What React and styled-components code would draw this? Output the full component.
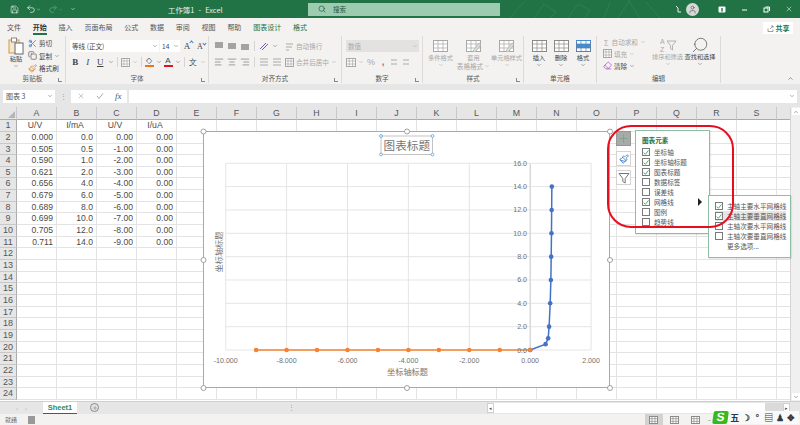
import React from "react";
import styled, { createGlobalStyle } from "styled-components";
import {
  AlignCenter,
  AlignLeft,
  AlignRight,
  ChevronDown,
  ChevronUp,
  Copy,
  Eraser,
  Paintbrush,
  Plus,
  Redo2,
  Save,
  Scissors,
  Search,
  Undo2,
  User,
  X,
} from "lucide-react";

const FONT = `"Noto Sans CJK SC", "Liberation Sans", sans-serif`;

const GlobalStyle = createGlobalStyle`
  html, body { margin: 0; padding: 0; background: #fff; }
  * { box-sizing: border-box; }
`;

const Window = styled.div`
  position: relative;
  width: 800px;
  height: 425px;
  overflow: hidden;
  display: flex;
  flex-direction: column;
  font-family: ${FONT};
  font-size: 7px;
  color: #444;
  background: #f3f2f1;
`;

/* title bar */
const TitleBar = styled.div`
  position: relative;
  height: 18px;
  flex: none;
  background: #217346;
  color: #fff;
  display: flex;
  align-items: center;
`;
const TitleArt = styled.svg`
  position: absolute;
  left: 500px;
  top: 0;
`;
const Quick = styled.div`
  width: 168px;
  padding-left: 10px;
  display: flex;
  align-items: center;
  gap: 7px;
`;
const QuickGroup = styled.span`
  display: flex;
  align-items: center;
  opacity: ${(p) => (p.$off ? 0.35 : 0.95)};
`;
const DocName = styled.div`
  width: 140px;
  font-size: 7.4px;
  word-spacing: 2.5px;
  opacity: 0.9;
`;
const SearchBox = styled.div`
  width: 192px;
  height: 13px;
  background: #9ccbb0;
  color: #24583c;
  display: flex;
  align-items: center;
  gap: 7px;
  padding-left: 10px;
  font-size: 6.5px;
`;
const WinButtons = styled.div`
  position: relative;
  flex: 1;
  display: flex;
  justify-content: flex-end;
  align-items: center;
  gap: 15px;
  padding-right: 7px;
`;
const Avatar = styled.span`
  width: 13px;
  height: 13px;
  border-radius: 50%;
  background: #d8d8d8;
  color: #666;
  display: flex;
  align-items: center;
  justify-content: center;
  margin: 0 4px 0 -11px;
`;

/* ribbon tabs */
const TabBar = styled.div`
  height: 17px;
  flex: none;
  display: flex;
  align-items: center;
  gap: 11.8px;
  padding-left: 7px;
`;
const Tab = styled.span`
  position: relative;
  font-size: 7px;
  line-height: 14px;
  font-weight: ${(p) => (p.$active ? 700 : 400)};
  color: ${(p) => (p.$green ? "#217346" : p.$active ? "#333" : "#555")};
  ${(p) =>
    p.$active &&
    `&::after {
      content: "";
      position: absolute;
      left: 0;
      right: 0;
      bottom: -1px;
      height: 1.3px;
      background: #217346;
    }`}
`;
const Share = styled.span`
  margin-left: auto;
  margin-right: 7px;
  width: 30px;
  height: 12px;
  margin-top: 3px;
  background: #fff;
  color: #217346;
  font-weight: 700;
  display: flex;
  align-items: center;
  justify-content: center;
  gap: 2px;
`;

/* ribbon */
const Ribbon = styled.div`
  height: 49px;
  flex: none;
  display: flex;
`;
const Group = styled.div`
  width: ${(p) => p.$w}px;
  margin: 1px 0;
  border-right: 1px solid #dcdbda;
  display: flex;
  flex-direction: column;
`;
const GroupBody = styled.div`
  flex: 1;
  display: flex;
  padding: ${(p) => p.$pad || "2px 3px 0"};
  gap: ${(p) => p.$gap || 0}px;
  min-height: 0;
`;
const GroupLabel = styled.div`
  position: relative;
  height: 9px;
  line-height: 9px;
  text-align: center;
  font-size: 6.6px;
  color: #555;
`;
const Launcher = styled.span`
  position: absolute;
  right: 3px;
  bottom: 1px;
  width: 4px;
  height: 4px;
  border-left: 1px solid #888;
  border-bottom: 1px solid #888;
`;
const Stack = styled.div`
  display: flex;
  flex: none;
  flex-direction: column;
  gap: ${(p) => p.$gap ?? 4}px;
  width: ${(p) => (p.$w ? `${p.$w}px` : "auto")};
`;
const Row = styled.div`
  display: flex;
  align-items: center;
  height: ${(p) => p.$h || 12}px;
  gap: ${(p) => p.$gap ?? 2}px;
  margin-left: ${(p) => p.$ml || 0}px;
  color: ${(p) => (p.$off ? "#a8a8a8" : "inherit")};
  font-size: 6.6px;
  white-space: nowrap;
`;
const Field = styled.div`
  width: ${(p) => p.$w}px;
  height: 12px;
  background: ${(p) => p.$bg || "#fff"};
  color: ${(p) => p.$color || "#444"};
  display: flex;
  align-items: center;
  justify-content: space-between;
  padding: 0 1px 0 2px;
  font-size: 6.6px;
`;
const BigButton = styled.div`
  width: ${(p) => p.$w}px;
  flex: none;
  display: flex;
  flex-direction: column;
  align-items: center;
  color: ${(p) => (p.$off ? "#a8a8a8" : "#444")};
  font-size: 6.2px;
  line-height: 8px;
  text-align: center;
  white-space: nowrap;
`;
const BigIcon = styled.div`
  height: 17px;
  display: flex;
  align-items: center;
  justify-content: center;
`;
const Face = styled.span`
  position: relative;
  font-family: "Liberation Serif", serif;
  font-size: ${(p) => p.$size || 9}px;
  font-weight: ${(p) => (p.$bold ? 700 : 400)};
  font-style: ${(p) => (p.$italic ? "italic" : "normal")};
  text-decoration: ${(p) => (p.$under ? "underline" : "none")};
  width: ${(p) => p.$w || 12}px;
  text-align: center;
  color: #444;
`;
const SizeMark = styled.span`
  position: absolute;
  right: 0;
  top: 0;
  width: 3px;
  height: 3px;
  border-left: 0.8px solid #3b7fc9;
  border-top: 0.8px solid #3b7fc9;
  transform: ${(p) => (p.$down ? "rotate(225deg)" : "rotate(45deg)")};
`;
const Swatch = styled.span`
  width: 9px;
  display: flex;
  flex-direction: column;
  align-items: center;
  line-height: 8px;
  font-family: "Liberation Sans", sans-serif;
  font-size: 8px;
  color: #444;
  &::after {
    content: "";
    width: 9px;
    height: 2px;
    background: ${(p) => p.$color};
  }
`;
const Hair = styled.span`
  width: 1px;
  height: 10px;
  background: #d5d4d3;
  margin: 0 1px;
`;
const NumSign = styled.span`
  width: ${(p) => p.$w || 10}px;
  text-align: center;
  font-family: "Liberation Sans", sans-serif;
  font-size: 9px;
  font-weight: ${(p) => (p.$bold ? 700 : 400)};
  color: ${(p) => (p.$bold ? "#777" : "#a8a8a8")};
`;
const FindIcon = styled(Search)`
  transform: scaleX(-1);
`;
const Collapse = styled.div`
  margin-left: 66px;
  height: 47px;
  display: flex;
  align-items: flex-end;
`;

/* formula bar */
const FormulaBar = styled.div`
  height: 23px;
  flex: none;
  background: #e6e6e6;
  display: flex;
  align-items: center;
  gap: 2px;
  padding: 3px 3px 2px;
`;
const NameBox = styled.div`
  width: 52px;
  height: 13px;
  background: #fff;
  display: flex;
  align-items: center;
  justify-content: space-between;
  padding: 0 2px 0 3px;
  color: #555;
  font-size: 7px;
`;
const Dots = styled.div`
  width: 12px;
  text-align: center;
  color: #999;
  font-size: 7px;
`;
const FxBox = styled.div`
  width: 56px;
  height: 13px;
  background: #fff;
  display: flex;
  align-items: center;
  justify-content: space-around;
  color: #aaa;
`;
const FxText = styled.i`
  font-family: "Liberation Serif", serif;
  font-size: 9px;
  color: #555;
`;
const FormulaInput = styled.div`
  flex: 1;
  height: 13px;
  background: #fff;
  display: flex;
  align-items: center;
  justify-content: flex-end;
  padding-right: 2px;
`;

/* sheet */
const SheetArea = styled.div`
  height: 294px;
  flex: none;
  display: flex;
  background: #fff;
`;
const Grid = styled.div`
  width: 790px;
  overflow: hidden;
  display: grid;
  grid-template-columns: 17px repeat(20, 40px);
  grid-template-rows: 13.2px repeat(24, 11.67px);
  font-family: "Liberation Sans", sans-serif;
  font-size: 8.6px;
`;
const Corner = styled.div`
  background: #e6e6e6;
  border-right: 1px solid #c8c8c8;
  border-bottom: 1px solid #ababab;
  position: relative;
  &::after {
    content: "";
    position: absolute;
    right: 1px;
    bottom: 1px;
    border-style: solid;
    border-width: 0 0 7px 7px;
    border-color: transparent transparent #b5b5b5 transparent;
  }
`;
const ColHead = styled.div`
  background: #e6e6e6;
  border-right: 1px solid #c8c8c8;
  border-bottom: 1px solid #ababab;
  color: #555;
  text-align: center;
  line-height: 13px;
  font-size: 8.8px;
`;
const RowHead = styled.div`
  background: #e6e6e6;
  border-right: 1px solid #ababab;
  border-bottom: 1px solid #c8c8c8;
  color: #555;
  text-align: center;
  line-height: 11px;
  font-size: 9px;
`;
const Cell = styled.div`
  border-right: 1px solid #e3e3e3;
  border-bottom: 1px solid #e3e3e3;
  color: #4a4a4a;
  line-height: 11px;
  padding-right: 3px;
  text-align: ${(p) => (p.$center ? "center" : "right")};
  white-space: nowrap;
`;
const VScroll = styled.div`
  width: 10px;
  background: #f0f0f0;
  border-left: 1px solid #d4d4d4;
  display: flex;
  flex-direction: column;
  justify-content: space-between;
  align-items: center;
  padding: 1px 0;
`;
const ScrollCap = styled.span`
  width: 8px;
  height: 7px;
  background: #fff;
  color: #555;
  display: flex;
  align-items: center;
  justify-content: center;
`;

/* chart lies over the grid */
const ChartFrame = styled.div`
  position: absolute;
  left: 203px;
  top: 131px;
  width: 407px;
  height: 257px;
  background: #fff;
  border: 1px solid #a9a9a9;
`;
const ChartSvg = styled.svg`
  position: absolute;
  left: -1px;
  top: -1px;
  overflow: visible;
  font-family: ${FONT};
`;

const SideButton = styled.div`
  position: absolute;
  left: 616px;
  top: ${(p) => p.$y}px;
  width: 15px;
  height: 15px;
  background: ${(p) => (p.$on ? "#a9a9a9" : "#fff")};
  border: 1px solid ${(p) => (p.$on ? "#969696" : "#d4d4d4")};
  display: flex;
  align-items: center;
  justify-content: center;
`;
const Popup = styled.div`
  position: absolute;
  left: ${(p) => p.$x}px;
  top: ${(p) => p.$y}px;
  width: ${(p) => p.$w}px;
  height: ${(p) => p.$h}px;
  padding: ${(p) => p.$pad};
  background: #fff;
  border: 1px solid #8fbda4;
  box-shadow: 1px 1px 1px rgba(0, 0, 0, 0.08);
`;
const PopupTitle = styled.div`
  height: 14px;
  line-height: 14px;
  font-size: 6.6px;
  font-weight: 700;
  color: #217346;
`;
const CheckRow = styled.div`
  height: 10px;
  display: flex;
  align-items: center;
  gap: 4px;
  font-size: 6.6px;
  color: #555;
  white-space: nowrap;
  background: ${(p) => (p.$hot ? "#e6e6e6" : "transparent")};
  margin-right: ${(p) => (p.$hot ? 4 : 0)}px;
`;
const Box = styled.span`
  width: 8px;
  height: 8px;
  flex: none;
  border: 1px solid #7a7a7a;
  background: #fff;
  display: flex;
  align-items: center;
  justify-content: center;
`;
const MoreRow = styled.div`
  height: 10px;
  line-height: 10px;
  padding-left: 12px;
  font-size: 6.6px;
  color: #555;
`;
const Pointer = styled.span`
  position: absolute;
  left: 698px;
  top: 198px;
  border-style: solid;
  border-width: 4px 0 4px 4.5px;
  border-color: transparent transparent transparent #222;
`;
const RedMark = styled.div`
  position: absolute;
  left: 607px;
  top: 125px;
  width: 127px;
  height: 103px;
  border: 2px solid #e60f1f;
  border-radius: 24px;
  pointer-events: none;
`;

/* sheet tabs */
const SheetBar = styled.div`
  height: 13px;
  flex: none;
  background: #e6e6e6;
  border-top: 1px solid #cfcfcf;
  display: flex;
  align-items: stretch;
`;
const TabNav = styled.div`
  width: 43px;
  display: flex;
  align-items: center;
  justify-content: center;
  gap: 7px;
  color: #aaa;
  font-size: 6px;
`;
const SheetTab = styled.div`
  width: 34px;
  background: #fff;
  border-bottom: 1.5px solid #217346;
  color: #2f8a5c;
  font-family: "Liberation Sans", sans-serif;
  font-size: 7.5px;
  font-weight: 700;
  line-height: 11px;
  text-align: center;
`;
const AddSheet = styled.div`
  width: 9px;
  height: 9px;
  margin: 1px 0 0 13px;
  border-radius: 50%;
  border: 1px solid #8a8a8a;
  color: #777;
  display: flex;
  align-items: center;
  justify-content: center;
`;
const HScroll = styled.div`
  margin-left: auto;
  margin-right: 10px;
  width: 303px;
  padding: 1px 0;
  display: flex;
  color: #555;
  font-size: 5px;
`;
const HDots = styled.span`
  margin: 0 3px 0 auto;
  color: #999;
  font-size: 7px;
  line-height: 10px;
`;
const HCap = styled.span`
  width: 7px;
  background: #fff;
  border: 1px solid #d0d0d0;
  text-align: center;
  line-height: 8px;
`;
const HThumb = styled.span`
  flex: ${(p) => p.$f};
  background: ${(p) => (p.$track ? "#dadada" : "#fff")};
`;

/* status bar */
const StatusBar = styled.div`
  height: 11px;
  flex: none;
  display: flex;
  align-items: center;
  padding-left: 5px;
  gap: 11px;
  font-size: 6px;
  color: #666;
`;
const MacroIcon = styled.span`
  width: 7px;
  height: 8px;
  background: #999;
`;
const ViewButton = styled.span`
  width: 18px;
  height: 11px;
  background: ${(p) => (p.$on ? "#d2d2d2" : "transparent")};
  display: flex;
  align-items: center;
  justify-content: center;
  color: #666;
`;
const Views = styled.div`
  margin-left: auto;
  margin-right: 89px;
  display: flex;
  align-items: center;
  gap: 3px;
`;
const ImeBar = styled.div`
  position: absolute;
  left: 713px;
  top: 411px;
  width: 86px;
  height: 13px;
  background: #f9f9f9;
  display: flex;
  align-items: center;
  gap: 2.3px;
  color: #334;
`;
const ImeLogo = styled.span`
  width: 15px;
  height: 13px;
  background: #35bb1c;
  border-radius: 2px;
  transform: skewX(-8deg);
  color: #fff;
  font-family: "Liberation Sans", sans-serif;
  font-size: 12px;
  font-weight: 700;
  line-height: 13px;
  text-align: center;
`;
const ImeChar = styled.span`
  font-size: 9px;
  font-weight: 700;
  line-height: 12px;
  width: 9px;
  text-align: center;
  color: #2d3a4a;
`;

/* small drawings */
const Svg = ({ w = 10, h = 10, children }) => (
  <svg width={w} height={h} viewBox={`0 0 ${w} ${h}`} fill="none">
    {children}
  </svg>
);

const Caret = ({ color = "#666" }) => <ChevronDown size={6} color={color} strokeWidth={2} />;

const Lines = ({ ys, x1 = 1, x2 = 9, color = "#555" }) => (
  <Svg>
    {ys.map((y, i) => (
      <line key={i} x1={x1} x2={x2} y1={y} y2={y} stroke={color} strokeWidth="1" />
    ))}
  </Svg>
);

const PasteIcon = () => (
  <Svg w={16} h={18}>
    <rect x="1" y="3" width="10" height="13" fill="#f4e7d0" stroke="#d39a3a" />
    <rect x="3.500" y="1" width="5" height="4" fill="#fff" stroke="#888" />
    <rect x="7" y="6" width="8" height="11" fill="#fff" stroke="#666" />
  </Svg>
);

const SheetIcon = ({ off, blue, pencil, w = 15, h = 12 }) => {
  const line = off ? "#a8a8a8" : blue ? "#5b7fa8" : "#8a8a8a";
  return (
    <Svg w={w} h={h}>
      <rect x=".5" y=".5" width={w - 1} height={h - 1} stroke={line} fill="#fff" />
      {blue && <rect x="1" y="4" width={w - 2} height="4" fill="#3d8edb" />}
      {blue && <line x1="0" x2={w} y1=".5" y2=".5" stroke="#3d8edb" />}
      {[1, 2].map((n) => (
        <line key={n} x1={(w * n) / 3} x2={(w * n) / 3} y1="0" y2={h} stroke={line} strokeWidth=".7" />
      ))}
      {[1, 2].map((n) => (
        <line key={n} x1="0" x2={w} y1={(h * n) / 3} y2={(h * n) / 3} stroke={line} strokeWidth=".7" />
      ))}
      {pencil && <path d={`M${w - 8} ${h - 1}l6-8 2 1.5-6 8z`} fill="#ddd" stroke={line} strokeWidth=".7" />}
    </Svg>
  );
};

const FilterIcon = () => (
  <Svg w={12} h={12}>
    <path d="M1 1.500h10L7.200 6.500v4.500L4.800 9.500v-3z" stroke="#777" strokeWidth="1" />
  </Svg>
);

const SortIcon = () => (
  <svg width="18" height="16" viewBox="0 0 18 16" fill="none">
    <text x="1" y="7" fontSize="7" fontFamily="Liberation Sans, sans-serif" fill="#aaa">A</text>
    <text x="1" y="15" fontSize="7" fontFamily="Liberation Sans, sans-serif" fill="#aaa">Z</text>
    <path d="M8 4h9L13.500 8.500V13L11.500 11.500V8.500z" stroke="#aaa" strokeWidth=".9" />
  </svg>
);

const Tick = () => (
  <Svg w={7} h={7}>
    <path d="M.8 3.600l2 2L6.400 1" stroke="#2f9e5f" strokeWidth="1" />
  </Svg>
);

/* data */
const COLUMNS = "ABCDEFGHIJKLMNOPQRST".split("");
const TABLE = [
  ["U/V", "I/mA", "U/V", "I/uA"],
  ["0.000", "0.0", "0.00", "0.00"],
  ["0.505", "0.5", "-1.00", "0.00"],
  ["0.590", "1.0", "-2.00", "0.00"],
  ["0.621", "2.0", "-3.00", "0.00"],
  ["0.656", "4.0", "-4.00", "0.00"],
  ["0.679", "6.0", "-5.00", "0.00"],
  ["0.689", "8.0", "-6.00", "0.00"],
  ["0.699", "10.0", "-7.00", "0.00"],
  ["0.705", "12.0", "-8.00", "0.00"],
  ["0.711", "14.0", "-9.00", "0.00"],
];
const ROW_COUNT = 24;
const TABS = ["文件", "开始", "插入", "页面布局", "公式", "数据", "审阅", "视图", "帮助"];
const ELEMENTS = [
  ["坐标轴", true],
  ["坐标轴标题", true],
  ["图表标题", true],
  ["数据标签", false],
  ["误差线", false],
  ["网格线", true],
  ["图例", false],
  ["趋势线", false],
];
const GRIDLINES = [
  ["主轴主要水平网格线", true],
  ["主轴主要垂直网格线", true, true],
  ["主轴次要水平网格线", false],
  ["主轴次要垂直网格线", false],
];

const BLUE = [
  [0, 0], [0.505, 0.5], [0.59, 1], [0.621, 2], [0.656, 4],
  [0.679, 6], [0.689, 8], [0.699, 10], [0.705, 12], [0.711, 14],
];
const ORANGE = [0, -1, -2, -3, -4, -5, -6, -7, -8, -9].map((x) => [x, 0]);
const px = (x) => 530.2 + x * 30.45;
const py = (y) => 350 - y * 11.67;
const poly = (pts) => pts.map(([x, y]) => `${px(x)},${py(y)}`).join(" ");
const HANDLES = [
  [203.5, 131.5], [407, 131.5], [610, 131.5], [203.5, 260],
  [610, 260], [203.5, 388], [407, 388], [610, 388],
];

const Chart = () => (
  <ChartFrame>
    <ChartSvg width="407" height="257" viewBox="203 131 407 257">
      {[-10, -8, -6, -4, -2, 0, 2].map((x) => (
        <line key={x} x1={px(x)} x2={px(x)} y1={py(16)} y2={py(0)} stroke={x === 0 ? "#cfcfcf" : "#dedede"} strokeWidth={x === 0 ? 1.2 : 0.8} />
      ))}
      {[0, 2, 4, 6, 8, 10, 12, 14, 16].map((y) => (
        <line key={y} x1={px(-10)} x2={px(2)} y1={py(y)} y2={py(y)} stroke="#dedede" strokeWidth="0.8" />
      ))}
      <polyline points={poly(BLUE)} stroke="#4472c4" strokeWidth="1.5" fill="none" />
      {BLUE.map(([x, y]) => (
        <circle key={y} cx={px(x)} cy={py(y)} r="2.3" fill="#4472c4" />
      ))}
      <polyline points={poly(ORANGE)} stroke="#f58232" strokeWidth="1.5" fill="none" />
      {ORANGE.map(([x, y]) => (
        <circle key={x} cx={px(x)} cy={py(y)} r="2.3" fill="#f58232" />
      ))}
      <g fontFamily="Liberation Sans, sans-serif" fontSize="7.1" fill="#707070">
        {[0, 2, 4, 6, 8, 10, 12, 14, 16].map((y) => (
          <text key={y} x="527" y={py(y) + 2.5} textAnchor="end">{y.toFixed(1)}</text>
        ))}
        {[-10, -8, -6, -4, -2, 0, 2].map((x) => (
          <text key={x} x={px(x)} y="362.5" textAnchor="middle">{x.toFixed(3)}</text>
        ))}
      </g>
      <text x="407.5" y="375" textAnchor="middle" fontSize="8.2" fill="#757575">坐标轴标题</text>
      <text transform="translate(222 252) rotate(-90)" textAnchor="middle" fontSize="8.2" fill="#757575">坐标轴标题</text>
      <rect x="381" y="136" width="51.5" height="18.5" stroke="#b4b4b4" strokeWidth="0.8" fill="none" />
      <text x="406.8" y="149.5" textAnchor="middle" fontSize="11.6" fill="#757575">图表标题</text>
      {[[381, 136], [432.5, 136], [381, 154.5], [432.5, 154.5]].map(([x, y]) => (
        <circle key={`${x}${y}`} cx={x} cy={y} r="1.4" fill="#fff" stroke="#62a9e6" strokeWidth="0.9" />
      ))}
      {HANDLES.map(([x, y]) => (
        <circle key={`${x}${y}`} cx={x} cy={y} r="2.5" fill="#fff" stroke="#8a8a8a" strokeWidth="0.8" />
      ))}
    </ChartSvg>
  </ChartFrame>
);

const App = () => (
  <Window>
    <GlobalStyle />
    <TitleBar>
      <TitleArt width="180" height="18" viewBox="0 0 180 18" fill="none" stroke="#2c7f52" strokeWidth="1">
        <path d="M10 18L24 2M34 18L44 4l12 8-6 6M68 18l10-14 12 6-5 8M104 18l6-16M118 18l12-18M140 18L128 0M160 18L146 2" />
      </TitleArt>
      <Quick>
        <QuickGroup><Save size={9} strokeWidth={1.6} /></QuickGroup>
        <QuickGroup><Undo2 size={10} strokeWidth={1.6} /><ChevronDown size={5} /></QuickGroup>
        <QuickGroup $off><Redo2 size={10} strokeWidth={1.6} /><ChevronDown size={5} /></QuickGroup>
        <QuickGroup><ChevronDown size={6} /></QuickGroup>
      </Quick>
      <DocName>工作簿1 - Excel</DocName>
      <SearchBox><Search size={8} strokeWidth={2} />搜索</SearchBox>
      <WinButtons>
        <Svg w={7} h={8}><path d="M1 1l2 2v4h3" stroke="#fff" strokeWidth=".9" /></Svg>
        <Avatar><User size={9} /></Avatar>
        <Svg w={8} h={7}><rect x=".5" y=".5" width="7" height="6" rx="1" fill="#fff" /><rect x="3.300" y="2" width="1.400" height="3.600" fill="#217346" /></Svg>
        <Svg w={7} h={7}><line x1="1" x2="6" y1="4" y2="4" stroke="#fff" /></Svg>
        <Svg w={7} h={7}><rect x="1" y="2" width="4" height="4" stroke="#fff" /><path d="M2.500 1h4v4" stroke="#fff" /></Svg>
        <X size={8} strokeWidth={1.5} />
      </WinButtons>
    </TitleBar>

    <TabBar>
      {TABS.map((t) => (
        <Tab key={t} $active={t === "开始"}>{t}</Tab>
      ))}
      <Tab $green>图表设计</Tab>
      <Tab $green>格式</Tab>
      <Share>
        <Svg w={7} h={7}><path d="M1 3.500v3h5v-2M3 4l3-3M4 1h2v2" stroke="#777" strokeWidth=".7" /></Svg>
        共享
      </Share>
    </TabBar>

    <Ribbon>
      <Group $w={66}>
        <GroupBody $pad="1px 0 0 7px" $gap={3}>
          <BigButton $w={18}>
            <PasteIcon />
            <span>粘贴</span>
            <Caret />
          </BigButton>
          <Stack $gap={0.5}>
            <Row><Scissors size={9} color="#3b74b8" />剪切</Row>
            <Row><Copy size={9} color="#666" />复制<Caret /></Row>
            <Row><Paintbrush size={9} color="#d8862b" />格式刷</Row>
          </Stack>
        </GroupBody>
        <GroupLabel>剪贴板<Launcher /></GroupLabel>
      </Group>

      <Group $w={143}>
        <GroupBody $pad="4px 0 0 4px">
          <Stack>
            <Row $gap={1}>
              <Field $w={89}>等线 (正文)<Caret /></Field>
              <Field $w={20}>14<Caret /></Field>
              <Face $size={9}>A<SizeMark /></Face>
              <Face $size={8}>A<SizeMark $down /></Face>
            </Row>
            <Row $gap={2}>
              <Face $bold $w={10.5}>B</Face>
              <Face $italic $w={10.5}>I</Face>
              <Face $under $w={10.5}>U</Face>
              <Caret />
              <Hair />
              <SheetIcon off w={9} h={9} />
              <Caret color="#aaa" />
              <Hair />
              <Swatch $color="#e8771a">◇</Swatch>
              <Caret />
              <Swatch $color="#e60f1f">A</Swatch>
              <Caret />
              <Hair />
              <Face $size={8} $w={10.5}>文</Face>
              <Caret color="#aaa" />
            </Row>
          </Stack>
        </GroupBody>
        <GroupLabel>字体<Launcher /></GroupLabel>
      </Group>

      <Group $w={133}>
        <GroupBody $pad="4px 0 0 5px">
          <Stack>
            <Row $gap={3}>
              <Lines ys={[2, 4, 6]} />
              <Lines ys={[3, 5, 7]} />
              <Lines ys={[4, 6, 8]} />
              <Hair />
              <Svg><path d="M1 8l6-6M3 9l6-6" stroke="#7a5aa8" strokeWidth="1" /></Svg>
              <Caret />
              <Row $off $gap={2} $h={10} $ml={4}>
                <Svg w={9} h={9}><path d="M1 2h7M1 5h6M1 8h3" stroke="#aaa" /></Svg>
                自动换行
              </Row>
            </Row>
            <Row $gap={3}>
              <AlignLeft size={10} color="#555" strokeWidth={1.3} />
              <AlignCenter size={10} color="#555" strokeWidth={1.3} />
              <AlignRight size={10} color="#555" strokeWidth={1.3} />
              <Hair />
              <Lines ys={[2, 5, 8]} color="#aaa" />
              <Lines ys={[2, 5, 8]} color="#aaa" />
              <Row $off $gap={2} $h={10}>
                <SheetIcon off w={9} h={9} />
                合并后居中
                <Caret color="#aaa" />
              </Row>
            </Row>
          </Stack>
        </GroupBody>
        <GroupLabel>对齐方式<Launcher /></GroupLabel>
      </Group>

      <Group $w={81}>
        <GroupBody $pad="4px 0 0 4px">
          <Stack>
            <Field $w={73} $bg="#e3e2e1" $color="#a8a8a8">数值<Caret color="#aaa" /></Field>
            <Row $off $gap={2}>
              <SheetIcon off w={10} h={9} />
              <Caret color="#aaa" />
              <NumSign>%</NumSign>
              <NumSign $bold>,</NumSign>
              <Lines ys={[3, 7]} x2={7} color="#aaa" />
              <Lines ys={[3, 7]} x2={7} color="#aaa" />
            </Row>
          </Stack>
        </GroupBody>
        <GroupLabel>数字<Launcher /></GroupLabel>
      </Group>

      <Group $w={101}>
        <GroupBody $pad="1px 0 0 1px">
          <BigButton $w={33} $off>
            <BigIcon><SheetIcon off /></BigIcon>
            条件格式
            <Caret color="#aaa" />
          </BigButton>
          <BigButton $w={33} $off>
            <BigIcon><SheetIcon off pencil /></BigIcon>
            套用
            <Row $gap={1} $h={8}>表格格式<Caret color="#aaa" /></Row>
          </BigButton>
          <BigButton $w={33} $off>
            <BigIcon><SheetIcon off pencil /></BigIcon>
            单元格样式
            <Caret color="#aaa" />
          </BigButton>
        </GroupBody>
        <GroupLabel>样式<Launcher /></GroupLabel>
      </Group>

      <Group $w={73}>
        <GroupBody $pad="1px 0 0 4px">
          <BigButton $w={22}>
            <BigIcon><SheetIcon /></BigIcon>
            插入
            <Caret />
          </BigButton>
          <BigButton $w={22}>
            <BigIcon><SheetIcon /></BigIcon>
            删除
            <Caret />
          </BigButton>
          <BigButton $w={22}>
            <BigIcon><SheetIcon blue /></BigIcon>
            格式
            <Caret />
          </BigButton>
        </GroupBody>
        <GroupLabel>单元格</GroupLabel>
      </Group>

      <Group $w={124}>
        <GroupBody $pad="0 0 0 6px">
          <Stack $gap={1} $w={50}>
            <Row $off $h={11}><span>∑</span>自动求和<Caret color="#aaa" /></Row>
            <Row $off $h={11}><SheetIcon off w={9} h={9} />填充<Caret color="#aaa" /></Row>
            <Row $h={11}><Eraser size={9} color="#a855c8" />清除<Caret /></Row>
          </Stack>
          <BigButton $w={29} $off>
            <BigIcon><SortIcon /></BigIcon>
            排序和筛选
            <Caret color="#aaa" />
          </BigButton>
          <BigButton $w={36}>
            <BigIcon><FindIcon size={18} strokeWidth={1} color="#555" /></BigIcon>
            查找和选择
            <Caret />
          </BigButton>
        </GroupBody>
        <GroupLabel>编辑</GroupLabel>
      </Group>
      <Collapse>
        <ChevronUp size={7} color="#555" />
      </Collapse>
    </Ribbon>

    <FormulaBar>
      <NameBox>图表 3<Caret /></NameBox>
      <Dots>⋮</Dots>
      <FxBox>
        <X size={8} />
        <Svg w={8} h={8}><path d="M1 4l2 2.500L7 1.500" stroke="#aaa" /></Svg>
        <FxText>fx</FxText>
      </FxBox>
      <FormulaInput><Caret /></FormulaInput>
    </FormulaBar>

    <SheetArea>
      <Grid>
        <Corner />
        {COLUMNS.map((c) => (
          <ColHead key={c}>{c === "T" ? "" : c}</ColHead>
        ))}
        {Array.from({ length: ROW_COUNT }, (_, r) => (
          <React.Fragment key={r}>
            <RowHead>{r + 1}</RowHead>
            {COLUMNS.map((c, i) => (
              <Cell key={c} $center={r === 0}>{TABLE[r]?.[i]}</Cell>
            ))}
          </React.Fragment>
        ))}
      </Grid>
      <VScroll>
        <ScrollCap><ChevronUp size={6} /></ScrollCap>
        <ScrollCap><ChevronDown size={6} /></ScrollCap>
      </VScroll>
    </SheetArea>

    <SheetBar>
      <TabNav><span>‹</span><span>›</span></TabNav>
      <SheetTab>Sheet1</SheetTab>
      <AddSheet><Plus size={6} /></AddSheet>
      <HDots>⋮</HDots>
      <HScroll>
        <HCap>◂</HCap>
        <HThumb $f={15} />
        <HThumb $f={1} $track />
        <HCap>▸</HCap>
      </HScroll>
    </SheetBar>

    <StatusBar>
      就绪
      <MacroIcon />
      <Views>
        <ViewButton $on><SheetIcon w={9} h={8} /></ViewButton>
        <ViewButton><SheetIcon w={9} h={8} /></ViewButton>
        <ViewButton><SheetIcon w={9} h={8} /></ViewButton>
        <span>–</span>
      </Views>
    </StatusBar>

    <Chart />

    <SideButton $y={131} $on><Plus size={13} strokeWidth={1.4} color="#5fae7f" /></SideButton>
    <SideButton $y={151}><Paintbrush size={10} color="#3c78c8" /></SideButton>
    <SideButton $y={170}><FilterIcon /></SideButton>

    <Popup $x={635} $y={130} $w={75} $h={104} $pad="2px 0 0 6px">
      <PopupTitle>图表元素</PopupTitle>
      {ELEMENTS.map(([label, on]) => (
        <CheckRow key={label}>
          <Box>{on && <Tick />}</Box>
          {label}
        </CheckRow>
      ))}
    </Popup>
    <Pointer />
    <Popup $x={708} $y={195} $w={83} $h={63} $pad="5px 0 0 6px">
      {GRIDLINES.map(([label, on, hot]) => (
        <CheckRow key={label} $hot={hot}>
          <Box>{on && <Tick />}</Box>
          {label}
        </CheckRow>
      ))}
      <MoreRow>更多选项...</MoreRow>
    </Popup>
    <RedMark />

    <ImeBar>
      <ImeLogo>S</ImeLogo>
      <ImeChar>五</ImeChar>
      <ImeChar>☽</ImeChar>
      <ImeChar>°</ImeChar>
      <ImeChar>▤</ImeChar>
      <ImeChar>♟</ImeChar>
      <ImeChar>✥</ImeChar>
    </ImeBar>
  </Window>
);

export default App;
